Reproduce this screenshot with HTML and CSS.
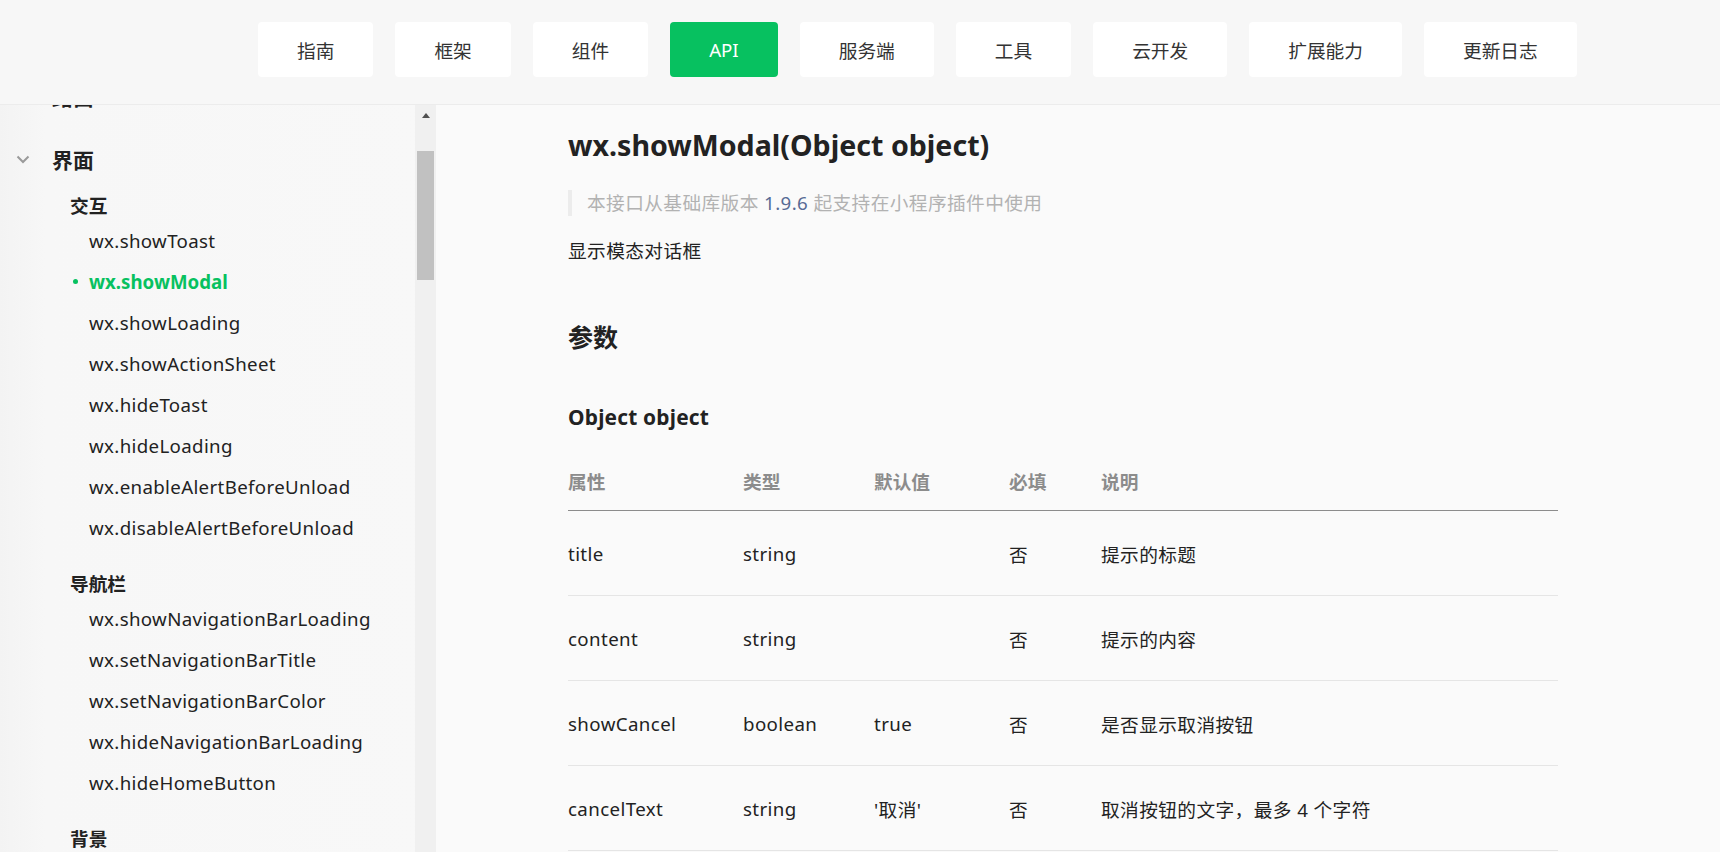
FILE: index.html
```html
<!DOCTYPE html>
<html lang="zh-CN">
<head>
<meta charset="utf-8">
<title>wx.showModal</title>
<link rel="stylesheet" href="styles.css">
</head>
<body>
<header class="topbar">
  <nav class="nav">
    <a class="nav-btn">指南</a>
    <a class="nav-btn">框架</a>
    <a class="nav-btn">组件</a>
    <a class="nav-btn active">API</a>
    <a class="nav-btn">服务端</a>
    <a class="nav-btn">工具</a>
    <a class="nav-btn">云开发</a>
    <a class="nav-btn">扩展能力</a>
    <a class="nav-btn">更新日志</a>
  </nav>
</header>
<div class="layout">
  <aside class="sidebar">
    <div class="side-scroll">
      <div class="side-list">
        <div class="top-item"><span class="chev"></span><span>路由</span></div>
        <div class="top-item open">
          <span class="chev"><svg width="14" height="9" viewBox="0 0 14 9"><path d="M1.5 1.5 L7 7 L12.5 1.5" fill="none" stroke="#9a9a9a" stroke-width="2"/></svg></span>
          <span>界面</span>
        </div>
        <div class="group">
          <div class="group-title">交互</div>
          <div class="item">wx.showToast</div>
          <div class="item current">wx.showModal</div>
          <div class="item">wx.showLoading</div>
          <div class="item">wx.showActionSheet</div>
          <div class="item">wx.hideToast</div>
          <div class="item">wx.hideLoading</div>
          <div class="item">wx.enableAlertBeforeUnload</div>
          <div class="item">wx.disableAlertBeforeUnload</div>
        </div>
        <div class="group">
          <div class="group-title">导航栏</div>
          <div class="item">wx.showNavigationBarLoading</div>
          <div class="item">wx.setNavigationBarTitle</div>
          <div class="item">wx.setNavigationBarColor</div>
          <div class="item">wx.hideNavigationBarLoading</div>
          <div class="item">wx.hideHomeButton</div>
        </div>
        <div class="group">
          <div class="group-title">背景</div>
          <div class="item">wx.setBackgroundTextStyle</div>
        </div>
      </div>
    </div>
    <div class="scrollbar">
      <div class="sb-arrow"></div>
      <div class="sb-thumb"></div>
    </div>
  </aside>
  <main class="content">
    <h1 class="title">wx.showModal(Object object)</h1>
    <blockquote class="notice">本接口从基础库版本 <a class="ver">1.9.6</a> 起支持在小程序插件中使用</blockquote>
    <p class="desc">显示模态对话框</p>
    <h2 class="h2">参数</h2>
    <h3 class="h3">Object object</h3>
    <div class="table">
      <div class="row head">
        <div>属性</div><div>类型</div><div>默认值</div><div>必填</div><div>说明</div>
      </div>
      <div class="row">
        <div>title</div><div>string</div><div></div><div>否</div><div>提示的标题</div>
      </div>
      <div class="row">
        <div>content</div><div>string</div><div></div><div>否</div><div>提示的内容</div>
      </div>
      <div class="row">
        <div>showCancel</div><div>boolean</div><div>true</div><div>否</div><div>是否显示取消按钮</div>
      </div>
      <div class="row">
        <div>cancelText</div><div>string</div><div>'取消'</div><div>否</div><div>取消按钮的文字，最多 4 个字符</div>
      </div>
      <div class="row">
        <div>cancelColor</div><div>string</div><div>#000000</div><div>否</div><div>取消按钮的文字颜色，必须是 16 进制格式的颜色字符串</div>
      </div>
    </div>
  </main>
</div>
</body>
</html>
```

FILE: styles.css
```css
* { box-sizing: border-box; }
html, body {
  margin: 0;
  padding: 0;
  height: 100%;
  overflow: hidden;
}
body {
  font-family: "Noto Sans", "Noto Sans CJK SC", sans-serif;
  color: #222;
  background: #f9f9f9;
  letter-spacing: 0.4px;
}
.topbar {
  height: 105px;
  background: #f7f7f7;
  border-bottom: 1px solid #ececec;
  padding: 22px 0 0 258px;
}
.nav {
  display: flex;
  gap: 22px;
}
.nav-btn {
  display: flex;
  align-items: center;
  height: 55px;
  padding: 0 39px;
  background: #fff;
  border-radius: 4px;
  font-size: 18.7px;
  letter-spacing: 0;
  color: #333;
}
.nav-btn.active {
  background: #07c160;
  color: #fff;
}
.layout {
  display: flex;
  height: calc(100% - 105px);
}
.sidebar {
  width: 436px;
  flex: none;
  display: flex;
  background: linear-gradient(90deg, #f3f3f3 0, #f7f7f7 45px, #f8f8f8 100%);
}
.side-scroll {
  flex: 1;
  overflow: hidden;
}
.side-list {
  margin-top: -29px;
}
.top-item {
  display: flex;
  align-items: center;
  height: 40px;
  margin-bottom: 23px;
  font-size: 20.9px;
  font-weight: 700;
  letter-spacing: 0;
  color: #222;
}
.top-item.open { margin-bottom: 11.5px; }
.chev {
  width: 52px;
  padding-left: 16px;
  display: flex;
  align-items: center;
}
.group { margin-bottom: 21px; }
.group-title {
  height: 29px;
  line-height: 29px;
  padding-left: 70px;
  font-size: 18.7px;
  font-weight: 700;
  letter-spacing: 0;
  color: #222;
}
.item {
  height: 41px;
  line-height: 41px;
  padding-left: 89px;
  font-size: 18.7px;
  letter-spacing: 0.35px;
  color: #222;
  position: relative;
  white-space: nowrap;
}
.item.current {
  color: #07c160;
  font-weight: 700;
  letter-spacing: 0;
}
.item.current::before {
  content: "";
  position: absolute;
  left: 73px;
  top: 18px;
  width: 5px;
  height: 5px;
  border-radius: 50%;
  background: #07c160;
}
.scrollbar {
  width: 21px;
  flex: none;
  background: #f0f0f0;
  padding: 0 2px;
  display: flex;
  flex-direction: column;
  align-items: center;
}
.sb-arrow {
  margin-top: 8px;
  width: 0;
  height: 0;
  border-left: 4px solid transparent;
  border-right: 4px solid transparent;
  border-bottom: 5px solid #505050;
}
.sb-thumb {
  margin-top: 33px;
  width: 17px;
  height: 129px;
  background: #c1c1c1;
}
.content {
  flex: 1;
  padding: 20px 0 0 132px;
  background: #fafafa;
  overflow: hidden;
}
.title {
  margin: 0;
  font-size: 28.6px;
  line-height: 40px;
  font-weight: 700;
  letter-spacing: 0;
  color: #222;
}
.notice {
  margin: 25px 0 0 0;
  border-left: 4px solid #ececec;
  padding-left: 15px;
  line-height: 26px;
  font-size: 18.7px;
  color: #b2b2b2;
}
.ver { color: #576b95; }
.desc {
  margin: 22px 0 0 0;
  line-height: 26px;
  font-size: 18.7px;
  color: #222;
}
.h2 {
  margin: 55px 0 0 0;
  line-height: 36px;
  font-size: 25px;
  font-weight: 700;
  letter-spacing: 0;
}
.h3 {
  margin: 47px 0 0 0;
  line-height: 30px;
  font-size: 20.9px;
  font-weight: 700;
  letter-spacing: 0.2px;
}
.table {
  margin-top: 23px;
  width: 990px;
}
.row {
  display: grid;
  grid-template-columns: 175px 131px 135px 92px 1fr;
  align-items: center;
  height: 85px;
  border-bottom: 1px solid #e5e5e5;
  font-size: 18.7px;
  color: #222;
}
.row.head {
  height: 56px;
  padding-bottom: 4px;
  border-bottom: 1px solid #8c8c8c;
  font-weight: 700;
  color: #8c8c8c;
  letter-spacing: 0;
}
```
